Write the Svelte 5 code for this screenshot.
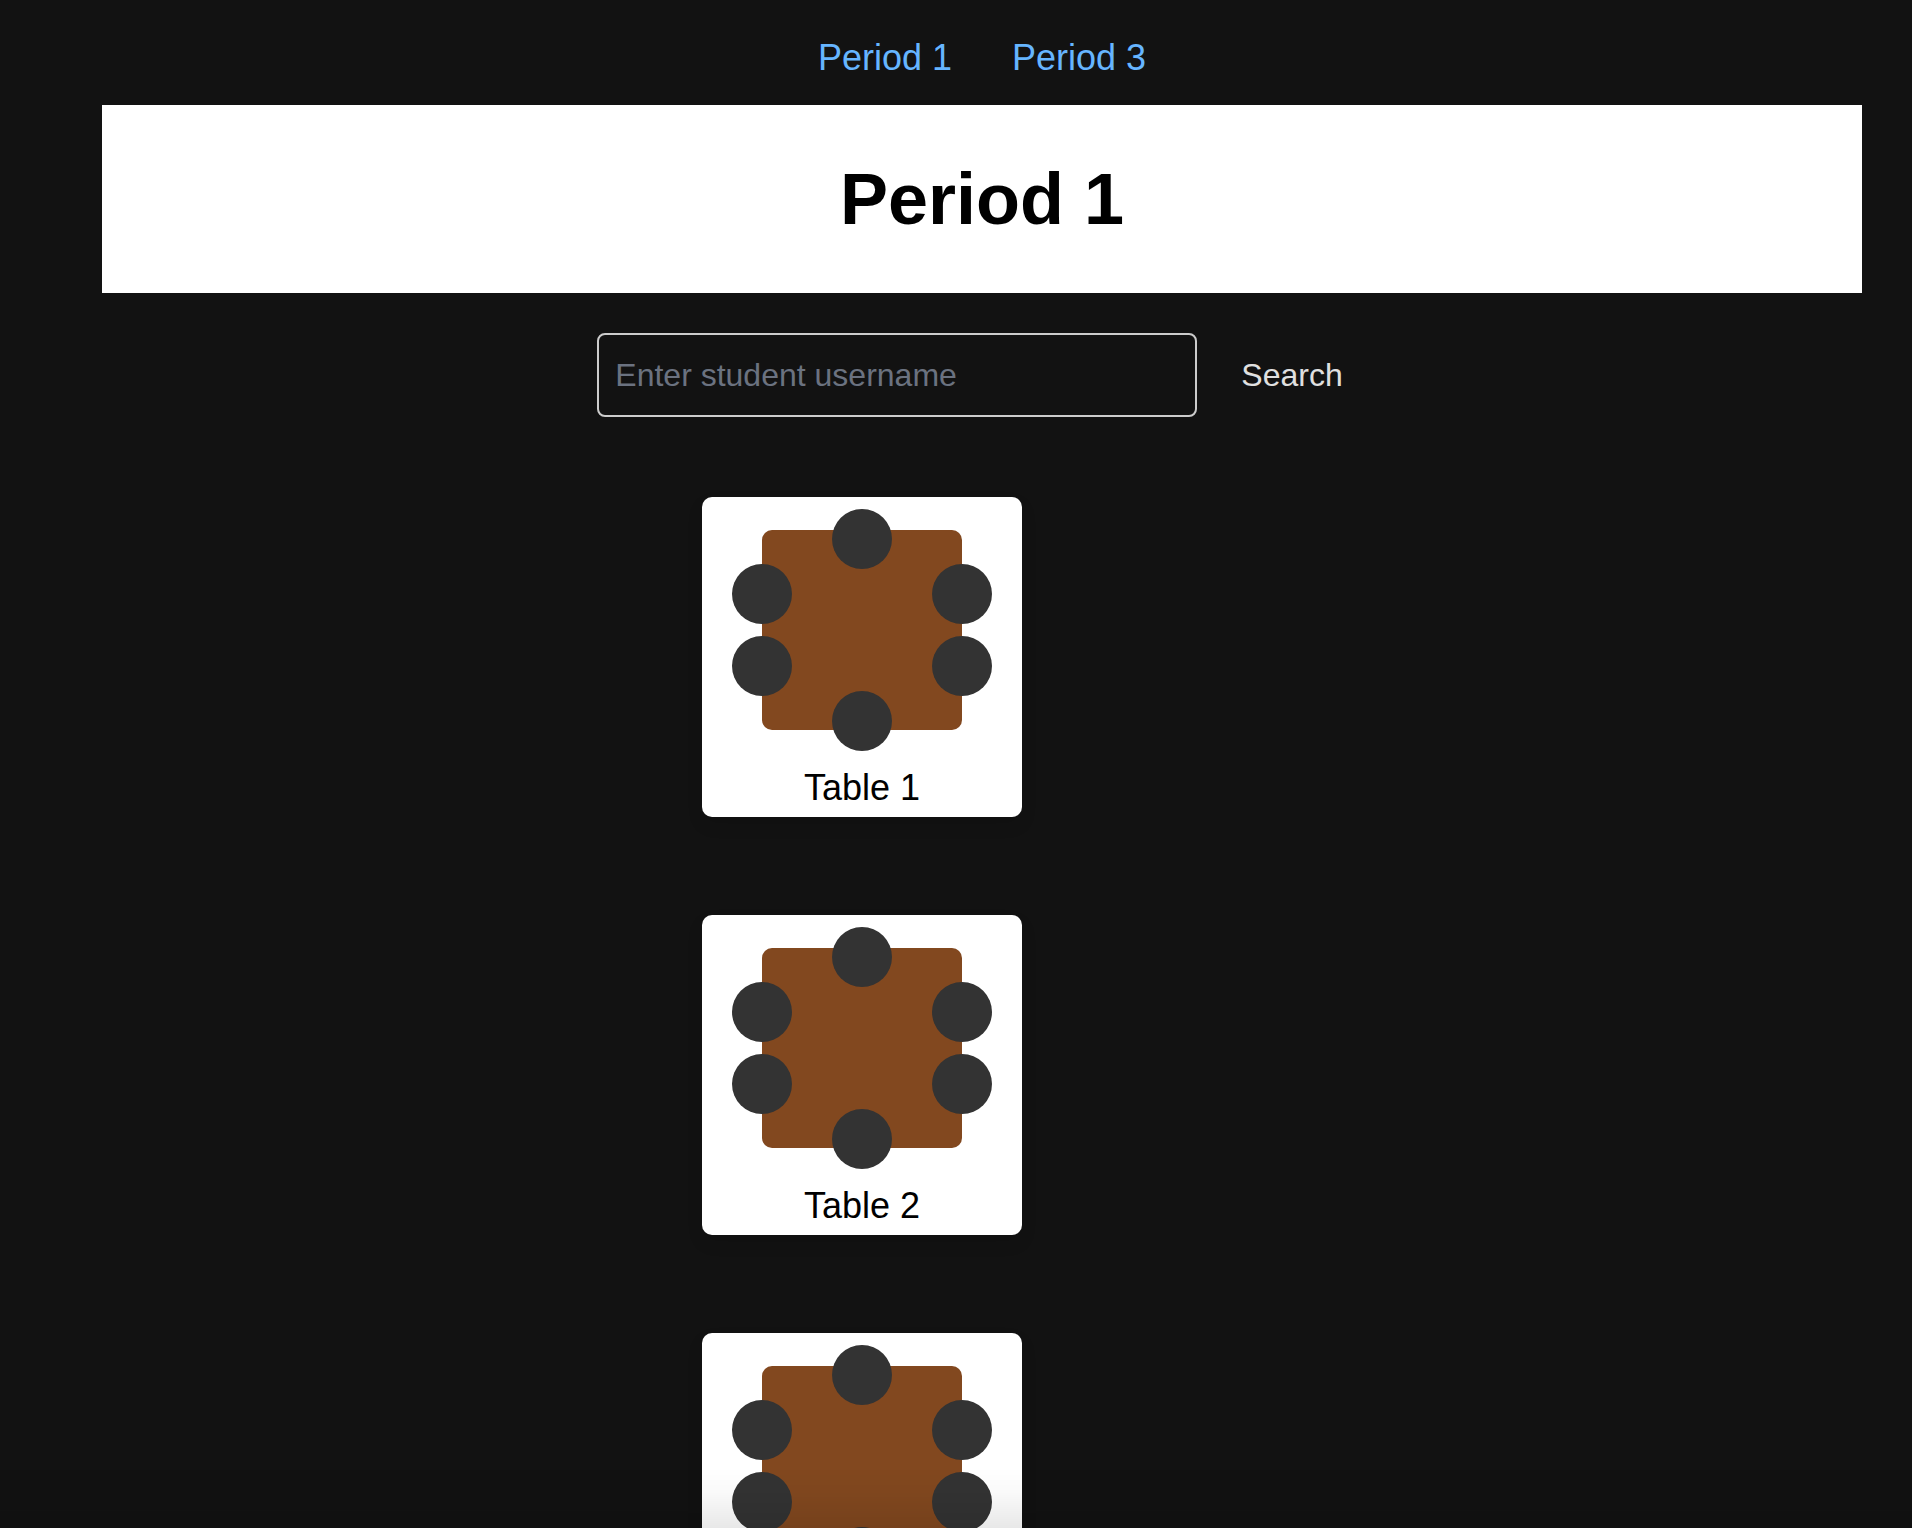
<script>
  const periods = ['Period 1', 'Period 3'];
  const tables = ['Table 1', 'Table 2', 'Table 3'];
  const seats = ['top', 'left-upper', 'right-upper', 'left-lower', 'right-lower', 'bottom'];
  let username = $state('');
</script>

<div class="page">
  <nav aria-label="Periods">
    {#each periods as period}
      <a href="#{period.toLowerCase().replace(' ', '-')}">{period}</a>
    {/each}
  </nav>

  <header>
    <h1>{periods[0]}</h1>
  </header>

  <main>
    <form onsubmit={(event) => event.preventDefault()}>
      <input
        type="text"
        aria-label="Student username"
        placeholder="Enter student username"
        bind:value={username}
      />
      <button type="submit">Search</button>
    </form>

    <div class="tables">
      {#each tables as table}
        <section class="card">
          <div class="desk">
            {#each seats as seat}
              <span class="seat {seat}"></span>
            {/each}
          </div>
          <h2>{table}</h2>
        </section>
      {/each}
    </div>
  </main>
</div>
<div class="fade"></div>

<style>
  :global(body) {
    background: #121212;
  }

  .page {
    box-sizing: border-box;
    height: 100vh;
    overflow-y: auto;
    scrollbar-width: none;
    padding: 31px 50px 80px 102px;
    font-family: 'Liberation Sans', Arial, sans-serif;
    font-size: 36px;
    line-height: 54px;
    color: #000;
  }

  nav {
    display: flex;
    justify-content: center;
    gap: 60px;
    margin-bottom: 20px;
  }

  a {
    color: #66b5ff;
    text-decoration: none;
  }

  header {
    padding: 40px;
    background: #fff;
    text-align: center;
  }

  h1 {
    margin: 0;
    font-size: 72px;
    line-height: 108px;
    font-weight: 700;
  }

  form {
    display: flex;
    justify-content: center;
    gap: 20px;
    margin: 40px 0 80px;
  }

  input,
  button {
    box-sizing: border-box;
    font: inherit;
    font-size: 32px;
    line-height: 48px;
    background: transparent;
    border-radius: 8px;
  }

  input {
    width: 600px;
    padding: 16px;
    border: 2px solid #ccc;
    color: #e0e0e0;
  }

  input::placeholder {
    color: #6b7280;
    opacity: 1;
  }

  button {
    padding: 16px 24px;
    border: 0;
    color: #e0e0e0;
    cursor: pointer;
  }

  .tables {
    display: flex;
    flex-direction: column;
    align-items: flex-start;
    gap: 98px;
    max-width: 560px;
    margin: 0 auto;
  }

  .card {
    box-sizing: border-box;
    display: flex;
    flex-direction: column;
    align-items: center;
    gap: 31px;
    width: 320px;
    padding: 33px 0 2px;
    background: #fff;
    border-radius: 10px;
    box-shadow: 0 8px 16px rgba(0, 0, 0, 0.1);
  }

  .desk {
    position: relative;
    width: 200px;
    height: 200px;
    background: #82481f;
    border-radius: 10px;
  }

  .seat {
    position: absolute;
    width: 60px;
    height: 60px;
    border-radius: 50%;
    background: #333;
  }

  .top {
    top: -21px;
    left: 70px;
  }

  .bottom {
    bottom: -21px;
    left: 70px;
  }

  .left-upper,
  .left-lower {
    left: -30px;
  }

  .right-upper,
  .right-lower {
    right: -30px;
  }

  .left-upper,
  .right-upper {
    top: 34px;
  }

  .left-lower,
  .right-lower {
    bottom: 34px;
  }

  h2 {
    margin: 0;
    font-size: 36px;
    font-weight: 400;
    line-height: 54px;
  }

  .fade {
    position: fixed;
    inset: auto 0 0;
    height: 60px;
    background: linear-gradient(transparent, rgba(0, 0, 0, 0.02) 40%, rgba(0, 0, 0, 0.09));
    pointer-events: none;
  }
</style>
